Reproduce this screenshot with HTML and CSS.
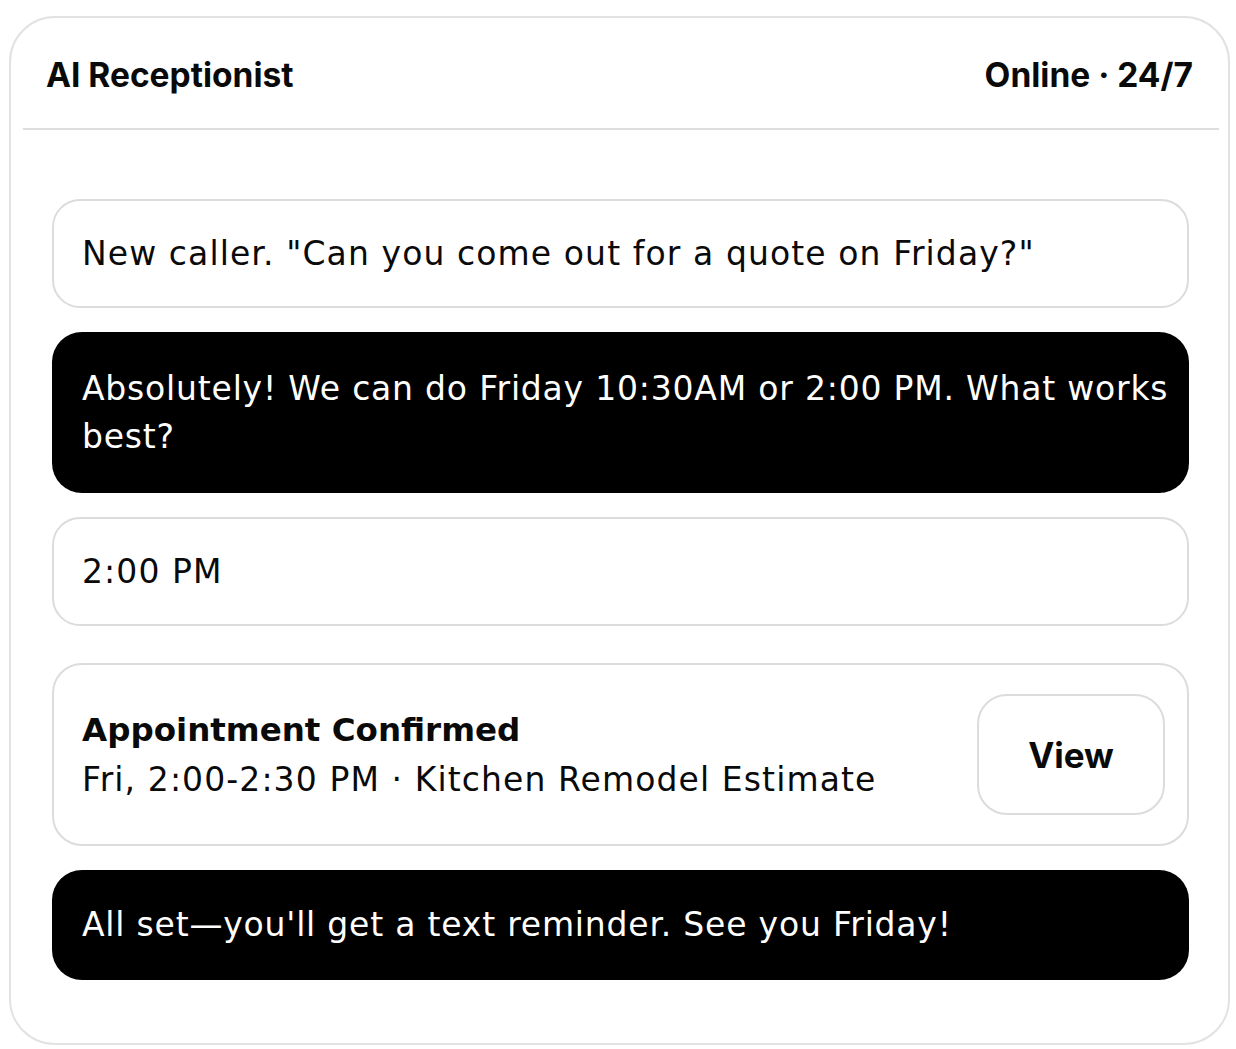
FILE: index.html
```html
<!DOCTYPE html>
<html lang="en">
<head>
<meta charset="utf-8">
<title>AI Receptionist</title>
<link rel="stylesheet" href="styles.css">
</head>
<body>
<div class="card">
  <div class="header">
    <div class="title">AI Receptionist</div>
    <div class="status">Online · 24/7</div>
  </div>
  <div class="messages">
    <div class="bubble light">New caller. "Can you come out for a quote on Friday?"</div>
    <div class="bubble dark two">Absolutely! We can do Friday 10:30AM or 2:00 PM. What works best?</div>
    <div class="bubble light">2:00 PM</div>
    <div class="appt">
      <div class="appt-info">
        <div class="appt-title">Appointment Confirmed</div>
        <div class="appt-sub">Fri, 2:00-2:30 PM · Kitchen Remodel Estimate</div>
      </div>
      <div class="view-btn">View</div>
    </div>
    <div class="bubble dark">All set—you'll get a text reminder. See you Friday!</div>
  </div>
</div>
</body>
</html>
```

FILE: styles.css
```css
html, body {
  margin: 0;
  padding: 0;
  background: #ffffff;
}
body {
  font-family: "DejaVu Sans", "Open Sans", sans-serif;
  color: #0a0a0a;
}
.card {
  box-sizing: border-box;
  margin: 16px 0 0 9px;
  width: 1221px;
  height: 1029px;
  border: 2px solid #e2e2e2;
  border-radius: 46px;
  padding: 0 9px 0 12px;
}
.header {
  display: flex;
  justify-content: space-between;
  align-items: center;
  height: 112px;
  padding: 4px 26px 0 23px;
  box-sizing: border-box;
  border-bottom: 2px solid #dedede;
  font-family: "Inter", "Open Sans", sans-serif;
  font-weight: 700;
  font-size: 33.5px;
}
.messages {
  display: flex;
  flex-direction: column;
  gap: 24px;
  padding: 69px 30px 0 29px;
}
.bubble {
  box-sizing: border-box;
  border-radius: 28px;
  font-size: 33px;
  letter-spacing: 1.1px;
  line-height: 48px;
}
.bubble.light {
  border: 2px solid #dcdcdc;
  padding: 29px 28px 28px;
}
.bubble.dark {
  background: #000000;
  color: #ffffff;
  padding: 31px 18px 31px 30px;
  border-radius: 30px;
  letter-spacing: 0.8px;
}
.bubble.dark.two {
  padding: 33px 18px 32px 30px;
}
.appt {
  box-sizing: border-box;
  border: 2px solid #dcdcdc;
  border-radius: 30px;
  height: 183px;
  margin-top: 13px;
  display: flex;
  align-items: center;
  justify-content: space-between;
  padding: 0 22px 0 28px;
}
.appt-title {
  font-weight: 700;
  font-size: 32.5px;
  line-height: 50px;
}
.appt-sub {
  font-size: 33px;
  letter-spacing: 1.1px;
  line-height: 50px;
}
.view-btn {
  box-sizing: border-box;
  width: 188px;
  height: 121px;
  border: 2px solid #dcdcdc;
  border-radius: 30px;
  display: flex;
  align-items: center;
  justify-content: center;
  font-family: "Inter", "Open Sans", sans-serif;
  font-weight: 700;
  font-size: 35px;
}
```
